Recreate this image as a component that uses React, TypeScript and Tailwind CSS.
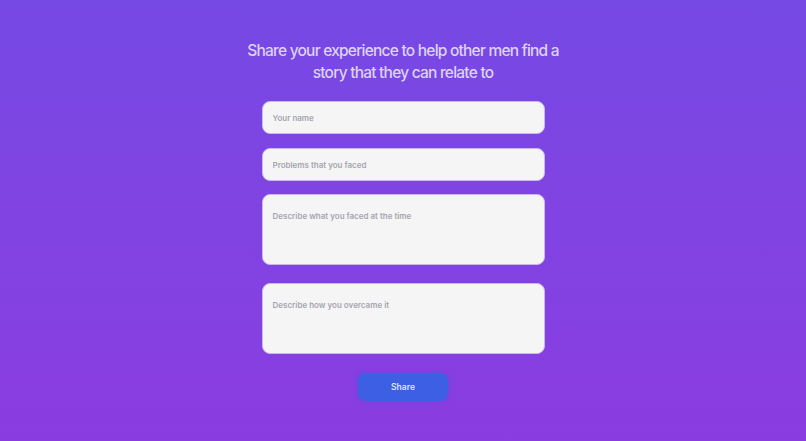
import React from "react";

const fieldClass =
  "w-full rounded-lg border border-[#c9b8f0] bg-[#f5f5f5] px-[10px] text-[8px] font-semibold text-gray-700 placeholder:text-[#a5a5b0] outline-none resize-none";

const App: React.FC = () => {
  return (
    <div
      className="flex min-h-[441px] w-full flex-col items-center bg-gradient-to-b from-[#7649e4] to-[#8a3ce0] pt-[40px]"
      style={{ fontFamily: "Inter, 'Noto Sans', sans-serif" }}
    >
      <h1 className="w-[330px] text-center text-[15.5px] leading-[22px] font-medium tracking-[-0.05em] text-[#ddd3f6]">
        Share your experience to help other men find a story that they can
        relate to
      </h1>

      <form
        className="mt-[17px] flex w-[283px] flex-col"
        onSubmit={(e) => e.preventDefault()}
      >
        <input type="text" placeholder="Your name" className={`${fieldClass} h-[33px]`} />
        <input
          type="text"
          placeholder="Problems that you faced"
          className={`${fieldClass} mt-[14px] h-[33px]`}
        />
        <textarea
          placeholder="Describe what you faced at the time"
          className={`${fieldClass} mt-[13px] h-[71px] pt-[15px] leading-[12px]`}
        />
        <textarea
          placeholder="Describe how you overcame it"
          className={`${fieldClass} mt-[18px] h-[71px] pt-[15px] leading-[12px]`}
        />
        <button
          type="submit"
          className="mx-auto mt-[19px] h-[28px] w-[90px] rounded-lg bg-[#3c5fe4] text-[8.5px] font-semibold text-[#dfe5fb] shadow-[0_0_4px_rgba(60,95,228,0.6)]"
        >
          Share
        </button>
      </form>
    </div>
  );
};

export default App;
